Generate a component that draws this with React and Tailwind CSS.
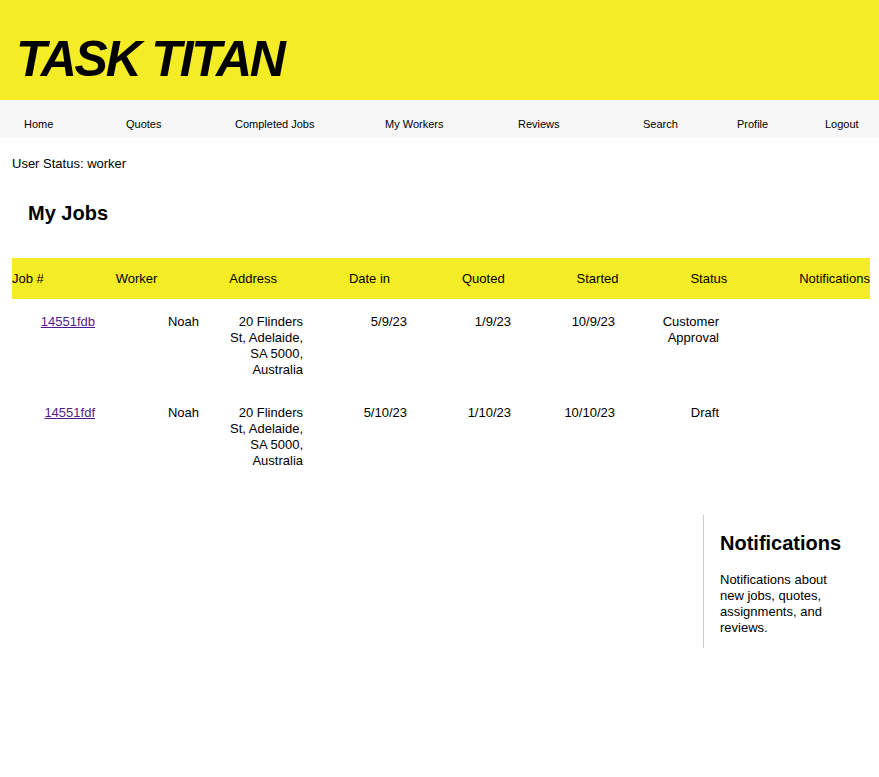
import React from "react";

const navItems = [
  { label: "Home", w: "w-[102px]" },
  { label: "Quotes", w: "w-[109px]" },
  { label: "Completed Jobs", w: "w-[150px]" },
  { label: "My Workers", w: "w-[133px]" },
  { label: "Reviews", w: "w-[125px]" },
  { label: "Search", w: "w-[94px]" },
  { label: "Profile", w: "w-[88px]" },
  { label: "Logout", w: "w-[50px]" },
];

const headers = ["Job #", "Worker", "Address", "Date in", "Quoted", "Started", "Status", "Notifications"];

const jobs = [
  {
    id: "14551fdb",
    worker: "Noah",
    address: "20 Flinders St, Adelaide, SA 5000, Australia",
    dateIn: "5/9/23",
    quoted: "1/9/23",
    started: "10/9/23",
    status: "Customer Approval",
  },
  {
    id: "14551fdf",
    worker: "Noah",
    address: "20 Flinders St, Adelaide, SA 5000, Australia",
    dateIn: "5/10/23",
    quoted: "1/10/23",
    started: "10/10/23",
    status: "Draft",
  },
];

const Cell = ({ children }) => (
  <div className="w-[104px] pl-[3px] pr-[21px] text-right">{children}</div>
);

export default function App() {
  return (
    <div className="min-h-[777px] bg-white text-black font-['Liberation_Sans',Arial,sans-serif]">
      <header className="h-[100px] bg-[#f4ec24] pl-4 pt-[34px]">
        <h1 className="text-[50px] font-bold italic leading-[50px] tracking-[-2.2px]">TASK TITAN</h1>
      </header>

      <nav className="h-[38px] bg-[#f7f7f7] pl-6 pt-[18px] flex text-[11px] leading-[13px]">
        {navItems.map((item) => (
          <a key={item.label} href="#" className={`${item.w} shrink-0`}>
            {item.label}
          </a>
        ))}
      </nav>

      <div className="px-3 text-[13px] leading-4">
        <p className="mt-[18px]">User Status: worker</p>

        <h2 className="ml-4 mt-[29px] text-[20px] font-bold leading-6">My Jobs</h2>

        <div className="mt-[33px] w-[858px] h-[41px] bg-[#f4ec24] flex items-center justify-between">
          {headers.map((h) => (
            <span key={h}>{h}</span>
          ))}
        </div>

        {jobs.map((job) => (
          <div key={job.id} className="flex pt-[15px] pb-[12px]">
            <Cell>
              <a href="#" className="text-[#551a8b] underline">
                {job.id}
              </a>
            </Cell>
            <Cell>{job.worker}</Cell>
            <Cell>{job.address}</Cell>
            <Cell>{job.dateIn}</Cell>
            <Cell>{job.quoted}</Cell>
            <Cell>{job.started}</Cell>
            <Cell>{job.status}</Cell>
            <Cell></Cell>
          </div>
        ))}

        <div className="mt-[34px] flex justify-end">
          <aside className="w-[152px] mr-3 border-l border-[#cccccc] pl-4 pr-4 pt-[16px] pb-[12px]">
            <h3 className="text-[20px] font-bold leading-6">Notifications</h3>
            <p className="mt-[17px]">Notifications about new jobs, quotes, assignments, and reviews.</p>
          </aside>
        </div>
      </div>
    </div>
  );
}
